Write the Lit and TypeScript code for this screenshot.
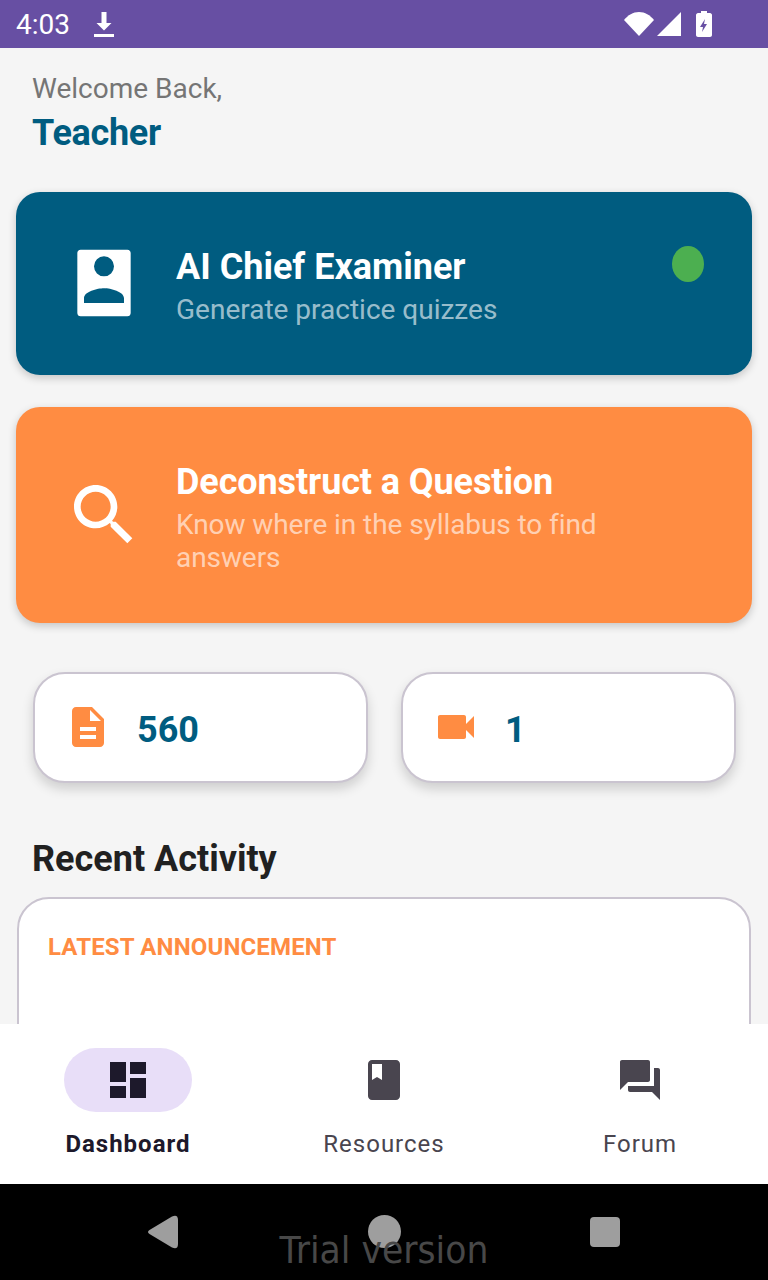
import { LitElement, html, css } from 'lit';
import { customElement } from 'lit/decorators.js';

@customElement('app-root')
export class AppRoot extends LitElement {
  static styles = css`
    :host {
      display: block;
      font-family: Roboto, "Liberation Sans", sans-serif;
    }
    .screen {
      display: flex;
      flex-direction: column;
      width: 768px;
      height: 1280px;
      overflow: hidden;
      background: #f5f5f5;
    }
    .status {
      flex: none;
      height: 48px;
      display: flex;
      align-items: center;
      padding: 0 56px 0 16px;
      background: #674fa3;
      color: #fff;
      font-size: 28px;
    }
    .status svg { display: block; fill: #fff; }
    .dl { margin-left: 24px; }
    .sys { margin-left: auto; display: flex; align-items: center; gap: 2px; }
    .batt { margin-left: 12px; }

    main {
      flex: 1;
      min-height: 0;
      overflow: hidden;
      padding: 0 16px;
    }
    .hello { padding: 22px 16px 0; height: 144px; box-sizing: border-box; }
    .welcome { font-size: 28px; line-height: 38px; color: #757575; }
    .name { font-size: 36px; line-height: 50px; font-weight: 700; color: #005c80; letter-spacing: -0.3px; }

    .action {
      display: flex;
      align-items: center;
      gap: 32px;
      padding: 0 48px;
      border-radius: 24px;
      color: #fff;
      box-shadow: 0 3px 8px rgba(0, 0, 0, 0.2);
      margin-bottom: 32px;
    }
    .action.blue { height: 183px; background: #005c80; position: relative; }
    .action.orange { height: 216px; background: #ff8c42; }
    .action svg { flex: none; width: 80px; height: 80px; fill: #fff; }
    .action.blue svg { margin-bottom: 2px; }
    .action h2 { margin: 0; font-size: 36px; line-height: 52px; font-weight: 700; }
    .action p { margin: 0; font-size: 28px; line-height: 33px; color: rgba(255, 255, 255, 0.62); }
    .action.orange h2 { letter-spacing: -0.1px; }
    .action.orange p { letter-spacing: -0.08px; }
    .dot {
      position: absolute;
      top: 54px;
      right: 48px;
      width: 32px;
      height: 36px;
      border-radius: 50%;
      background: #4caf50;
    }

    .stats {
      display: grid;
      grid-template-columns: 1fr 1fr;
      gap: 33px;
      margin: 49px 16.5px 0;
    }
    .stat {
      height: 111px;
      box-sizing: border-box;
      display: flex;
      align-items: flex-start;
      gap: 25px;
      padding: 29px 29.5px 0;
      background: #fff;
      border: 2px solid #cac4d0;
      border-radius: 32px;
      box-shadow: 0 6px 12px rgba(0, 0, 0, 0.16);
      color: #005c80;
      font-size: 36px;
      line-height: 54px;
      font-weight: 700;
    }
    .stat svg { flex: none; width: 48px; height: 48px; fill: #ff8c42; }

    h3 {
      margin: 0;
      padding: 53px 16px 0;
      font-size: 36px;
      line-height: 46px;
      font-weight: 700;
      color: #212121;
    }
    .activity {
      margin: 15px 1px 0;
      height: 200px;
      box-sizing: border-box;
      padding: 32px 29px;
      background: #fff;
      border: 2px solid #cac4d0;
      border-radius: 32px;
    }
    .eyebrow { font-size: 24px; line-height: 32px; font-weight: 700; color: #ff8c42; letter-spacing: 0.15px; }

    nav {
      flex: none;
      height: 160px;
      display: grid;
      grid-template-columns: repeat(3, 256px);
      background: #fff;
    }
    .tab {
      display: flex;
      flex-direction: column;
      align-items: center;
      padding-top: 24px;
      color: #49454f;
      font-size: 24px;
      font-weight: 400;
      letter-spacing: 1px;
    }
    .tab.on { color: #1d192b; font-weight: 700; }
    .pill {
      width: 128px;
      height: 64px;
      display: flex;
      align-items: center;
      justify-content: center;
      border-radius: 32px;
      margin-bottom: 16px;
    }
    .tab.on .pill { background: #e8def8; }
    .pill svg { width: 48px; height: 48px; fill: currentColor; }
    .tab span { line-height: 32px; }

    .sysnav {
      position: relative;
      flex: none;
      height: 96px;
      box-sizing: border-box;
      background: #000;
      display: flex;
      align-items: flex-start;
      gap: 188px;
      padding: 31px 0 0 147px;
    }
    .sysnav svg { flex: none; display: block; fill: #9e9e9e; }
    .sysnav .circle { margin-left: 1px; }
    .sysnav .square { margin: 2px 0 0 1px; }
    .trial {
      position: absolute;
      left: 0;
      right: 0;
      top: 42px;
      text-align: center;
      font-family: "DejaVu Sans", sans-serif;
      font-size: 38px;
      line-height: 48px;
      color: #484848;
      transform: scaleX(0.912);
    }
  `;

  render() {
    return html`
      <div class="screen">
        <div class="status">
          <span>4:03</span>
          <svg class="dl" width="20" height="26" viewBox="0 0 20 26"><path d="M7.500 1h5v11h5l-7.500 7.500L2.500 12h5zM0 23h20v3H0z"/></svg>
          <div class="sys">
            <svg width="30" height="26" viewBox="0 0 30 26"><path d="M0 9C4 4 9 1 15 1s11 3 15 8L15 25z"/></svg>
            <svg width="26" height="26" viewBox="0 0 26 26"><path d="M25 1v24H1z"/></svg>
            <svg class="batt" width="16" height="26" viewBox="0 0 16 26"><path fill-rule="evenodd" d="M5 0h6v2h3c1 0 2 1 2 2v20c0 1-1 2-2 2H2c-1 0-2-1-2-2V4c0-1 1-2 2-2h3zM9 8l-5 8h3l-1 5 5-8H8z"/></svg>
          </div>
        </div>

        <main>
          <div class="hello">
            <div class="welcome">Welcome Back,</div>
            <div class="name">Teacher</div>
          </div>

          <div class="action blue">
            <svg viewBox="0 0 24 24"><path fill-rule="evenodd" d="M5 2h14c.6 0 1 .4 1 1v18c0 .6-.4 1-1 1H5c-.6 0-1-.4-1-1V3c0-.6.4-1 1-1zm7 2a3 3 0 1 0 0 6 3 3 0 0 0 0-6zM6 18h12v-1.400c0-2-4-3-6-3s-6 1-6 3z"/></svg>
            <div>
              <h2>AI Chief Examiner</h2>
              <p>Generate practice quizzes</p>
            </div>
            <div class="dot"></div>
          </div>

          <div class="action orange">
            <svg viewBox="0 0 24 24"><path d="M15.5 14h-.79l-.28-.27C15.41 12.59 16 11.11 16 9.5 16 5.91 13.09 3 9.5 3S3 5.91 3 9.5 5.91 16 9.5 16c1.61 0 3.09-.59 4.23-1.57l.27.28v.79l5 4.99L20.49 19l-4.99-5zm-6 0C7.01 14 5 11.99 5 9.5S7.01 5 9.5 5 14 7.01 14 9.5 11.99 14 9.5 14z"/></svg>
            <div>
              <h2>Deconstruct a Question</h2>
              <p>Know where in the syllabus to find answers</p>
            </div>
          </div>

          <div class="stats">
            <div class="stat">
              <svg viewBox="0 0 24 24"><path d="M14 2H6c-1.1 0-2 .9-2 2v16c0 1.1.9 2 2 2h12c1.1 0 2-.9 2-2V8l-6-6zm2 16H8v-2h8v2zm0-4H8v-2h8v2zm-3-5V3.5L18.500 9H13z"/></svg>
              <span>560</span>
            </div>
            <div class="stat">
              <svg viewBox="0 0 24 24"><path d="M17 10.5V7c0-.55-.45-1-1-1H4c-.55 0-1 .45-1 1v10c0 .55.45 1 1 1h12c.55 0 1-.45 1-1v-3.5l4 4v-11l-4 4z"/></svg>
              <span>1</span>
            </div>
          </div>

          <h3>Recent Activity</h3>
          <div class="activity">
            <div class="eyebrow">LATEST ANNOUNCEMENT</div>
          </div>
        </main>

        <nav>
          <div class="tab on">
            <div class="pill"><svg viewBox="0 0 24 24"><path d="M3 13h8V3H3v10zm0 8h8v-6H3v6zm10 0h8V11h-8v10zm0-18v6h8V3h-8z"/></svg></div>
            <span>Dashboard</span>
          </div>
          <div class="tab">
            <div class="pill"><svg viewBox="0 0 24 24"><path d="M18 2H6c-1.1 0-2 .9-2 2v16c0 1.1.9 2 2 2h12c1.1 0 2-.9 2-2V4c0-1.1-.9-2-2-2zM6 4h5v8l-2.5-1.5L6 12V4z"/></svg></div>
            <span>Resources</span>
          </div>
          <div class="tab">
            <div class="pill"><svg viewBox="0 0 24 24"><path d="M21 6h-2v9H6v2c0 .55.45 1 1 1h11l4 4V7c0-.55-.45-1-1-1zm-4 6V3c0-.55-.45-1-1-1H3c-.55 0-1 .45-1 1v14l4-4h10c.55 0 1-.45 1-1z"/></svg></div>
            <span>Forum</span>
          </div>
        </nav>

        <div class="sysnav">
          <svg width="32" height="34" viewBox="0 0 32 34"><path d="M2.500 15 25 1.500Q31-1 31 5v24q0 6-6 3.500L2.500 19q-3-2 0-4z"/></svg>
          <svg class="circle" width="33" height="33" viewBox="0 0 33 33"><circle cx="16.500" cy="16.500" r="16.500"/></svg>
          <svg class="square" width="30" height="30" viewBox="0 0 30 30"><rect width="30" height="30" rx="4"/></svg>
          <div class="trial">Trial version</div>
        </div>
      </div>
    `;
  }
}
